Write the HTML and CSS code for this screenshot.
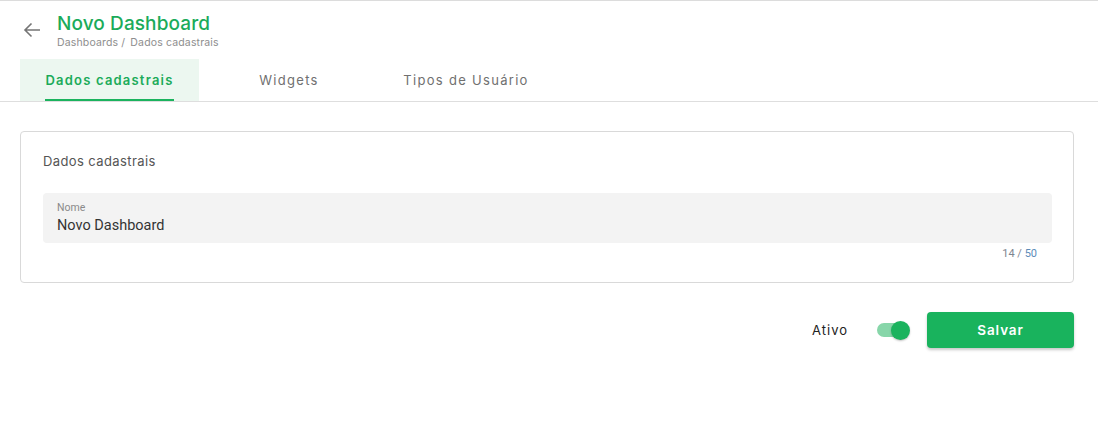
FILE: index.html
```html
<!DOCTYPE html>
<html lang="pt">
<head>
<meta charset="utf-8">
<link rel="stylesheet" href="styles.css">
</head>
<body>
<div class="page">
  <header class="header">
    <button class="back" aria-label="Voltar">
      <svg width="24" height="24" viewBox="0 0 24 24"><path d="M20 12H5M11.5 5.5L5 12l6.5 6.5" fill="none" stroke="#757575" stroke-width="1.6"/></svg>
    </button>
    <div class="titles">
      <h1 class="title">Novo Dashboard</h1>
      <div class="crumbs"><span>Dashboards /</span> <span>Dados cadastrais</span></div>
    </div>
  </header>
  <nav class="tabs">
    <div class="tab active"><span class="tab-label">Dados cadastrais</span></div>
    <div class="tab"><span class="tab-label">Widgets</span></div>
    <div class="tab"><span class="tab-label">Tipos de Usuário</span></div>
  </nav>
  <main class="content">
    <section class="card">
      <h2 class="card-title">Dados cadastrais</h2>
      <div class="field">
        <label class="field-label">Nome</label>
        <div class="field-value">Novo Dashboard</div>
      </div>
      <div class="hint">14 / <span class="hint-max">50</span></div>
    </section>
    <div class="actions">
      <span class="ativo">Ativo</span>
      <span class="toggle"><span class="track"></span><span class="knob"></span></span>
      <button class="save">Salvar</button>
    </div>
  </main>
</div>
</body>
</html>
```

FILE: styles.css
```css
* { box-sizing: border-box; }
html, body { margin: 0; padding: 0; background: #fff; }
body { font-family: Inter, "Noto Sans", sans-serif; color: #333; }
.page { border-top: 1px solid #dcdcdc; width: 1098px; height: 446px; }

.header { display: flex; align-items: flex-start; padding: 11px 0 0 20px; height: 58px; }
.back { width: 24px; height: 24px; margin-top: 6px; padding: 0; border: 0; background: none; display: flex; align-items: center; justify-content: center; }
.titles { margin-left: 13px; }
.title { margin: 0; font-size: 19px; font-weight: 500; color: #1bab5a; line-height: 23px; letter-spacing: 0.1px; }
.crumbs { font-size: 10.5px; color: #8e8e8e; line-height: 14px; margin-top: 1px; letter-spacing: 0.15px; }
.crumbs span + span { margin-left: 2px; }

.tabs { display: flex; border-bottom: 1px solid #dedede; padding-left: 20px; height: 43px; }
.tab { height: 42px; display: flex; align-items: center; justify-content: center; position: relative; font-size: 13px; letter-spacing: 1.3px; color: #707070; font-weight: 400; }
.tab:nth-child(1) { width: 179px; }
.tab:nth-child(2) { width: 180px; }
.tab:nth-child(3) { width: 174px; }
.tab.active { background: #ecf7f0; color: #1bab5a; font-weight: 600; letter-spacing: 1.2px; }
.tab.active .tab-label { height: 42px; display: flex; align-items: center; border-bottom: 2px solid #1bb35e; padding-top: 2px; }

.content { padding: 29px 24px 0 20px; }
.card { border: 1px solid #d9d9d9; border-radius: 4px; padding: 20px 21px 22px 22px; height: 152px; }
.card-title { margin: 0; font-size: 13px; font-weight: 400; color: #555; line-height: 18px; letter-spacing: 0.4px; }
.field { margin-top: 23px; background: #f3f3f3; border-radius: 4px; height: 50px; padding: 9px 14px 0; }
.field-label { display: block; font-family: Roboto, sans-serif; font-size: 10.5px; color: #8a8a8a; line-height: 12px; }
.field-value { font-family: Roboto, sans-serif; font-size: 14.5px; color: #333; line-height: 20px; margin-top: 2px; }
.hint { text-align: right; padding-right: 15px; font-family: Roboto, sans-serif; font-size: 11px; color: #7e8590; margin-top: 3px; line-height: 16px; }
.hint-max { color: #5c8bb8; }

.actions { display: flex; align-items: center; justify-content: flex-end; margin-top: 29px; }
.ativo { font-size: 13px; letter-spacing: 1px; color: #222; font-weight: 400; }
.toggle { position: relative; width: 34px; height: 20px; margin-left: 28px; margin-right: 17px; display: inline-block; }
.track { position: absolute; left: 1px; top: 3px; width: 30px; height: 14px; border-radius: 7px; background: #87d6a9; }
.knob { position: absolute; left: 15px; top: 1px; width: 19px; height: 19px; border-radius: 50%; background: #1bb35e; box-shadow: 0 1px 2px rgba(0,0,0,0.25); }
.save { width: 147px; height: 36px; border: 0; border-radius: 4px; background: #19b35d; color: #fff; font-family: Inter, sans-serif; font-weight: 600; font-size: 13.5px; letter-spacing: 0.9px; box-shadow: 0 2px 3px rgba(0,0,0,0.22); }
```
